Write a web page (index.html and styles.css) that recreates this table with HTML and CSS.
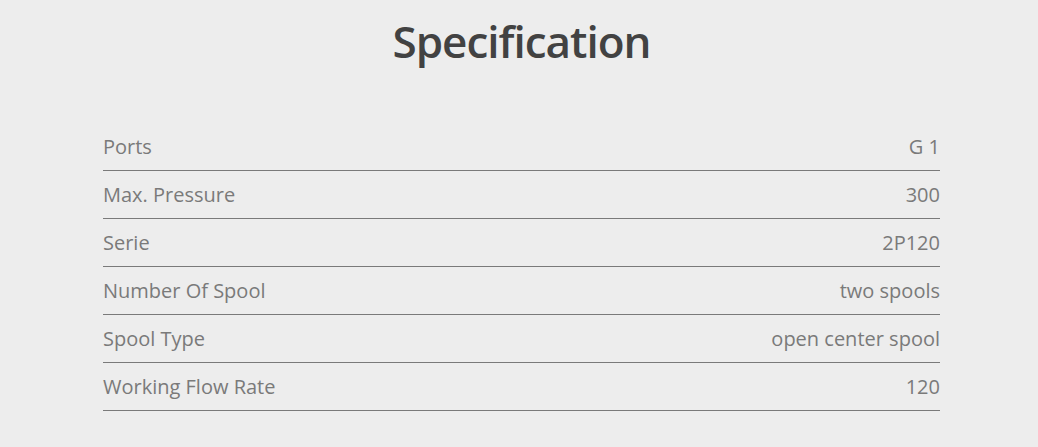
FILE: index.html
```html
<!DOCTYPE html>
<html>
<head>
<meta charset="utf-8">
<link rel="stylesheet" href="styles.css">
</head>
<body>
<section class="spec">
  <h1 class="spec-title">Specification</h1>
  <div class="spec-table">
    <div class="spec-row"><span class="spec-key">Ports</span><span class="spec-val">G 1</span></div>
    <div class="spec-row"><span class="spec-key">Max. Pressure</span><span class="spec-val">300</span></div>
    <div class="spec-row"><span class="spec-key">Serie</span><span class="spec-val">2P120</span></div>
    <div class="spec-row"><span class="spec-key">Number Of Spool</span><span class="spec-val">two spools</span></div>
    <div class="spec-row"><span class="spec-key">Spool Type</span><span class="spec-val">open center spool</span></div>
    <div class="spec-row"><span class="spec-key">Working Flow Rate</span><span class="spec-val">120</span></div>
  </div>
</section>
</body>
</html>
```
FILE: styles.css
```css
html, body {
  margin: 0;
  padding: 0;
  background: #ededed;
}
body {
  font-family: "Open Sans", "Noto Sans", sans-serif;
  width: 1038px;
  height: 447px;
  overflow: hidden;
}
.spec {
  padding: 0 98px 0 103px;
}
.spec-title {
  margin: 0;
  padding-top: 12px;
  height: 110px;
  box-sizing: border-box;
  text-align: center;
  font-size: 44px;
  font-weight: 600;
  color: #424242;
  letter-spacing: -1px;
  line-height: 58px;
}
.spec-table {
  display: flex;
  flex-direction: column;
  padding-top: 13px;
}
.spec-row {
  display: flex;
  justify-content: space-between;
  align-items: center;
  height: 47px;
  border-bottom: 1px solid #7a7a7a;
  font-size: 20px;
  color: #7a7a7a;
}
```
